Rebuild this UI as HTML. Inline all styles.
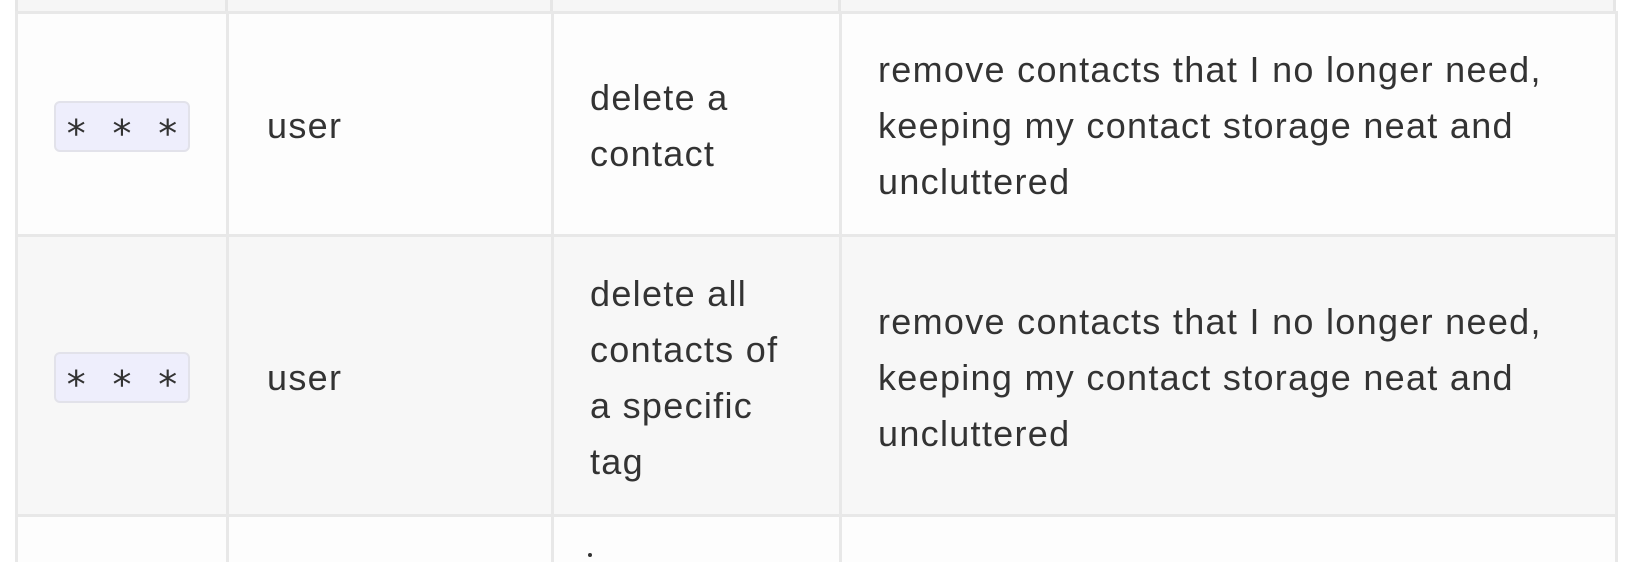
<!DOCTYPE html>
<html><head><style>
html,body{margin:0;padding:0;background:#fff;width:1633px;height:562px;overflow:hidden}
body{position:relative;font-family:"Liberation Sans",sans-serif;color:#333}
.top{position:absolute;left:15px;top:0;width:1601px;height:12px;background:#f6f6f6;border-left:3px solid #e6e6e6;border-right:3px solid #e6e6e6;box-sizing:border-box}
.tl{position:absolute;top:0;height:12px;width:3px;background:#e6e6e6}
table{position:absolute;left:15px;top:11px;border-collapse:collapse;table-layout:fixed;width:1603px}
td{border:3px solid #e8e8e8;font-size:36px;letter-spacing:1.3px;line-height:56px;padding:4px 36px 0;vertical-align:middle;box-sizing:border-box;white-space:nowrap;overflow:hidden}
tr.a td{background:#fdfdfd}
tr.b td{background:#f7f7f7}
td.c1{padding:0 0 0 36px}
.badge{display:inline-block;width:136px;text-align:center;background:#eeeefc;border:2px solid #e2e2ea;border-radius:6px;font-family:"DejaVu Sans Mono",monospace;font-size:38px;letter-spacing:0;line-height:47px;height:51px;box-sizing:border-box;vertical-align:middle}
td.c2{padding-left:38px}
.dot{position:absolute;left:588px;top:553px;width:4px;height:4px;background:#333;border-radius:2px}
</style></head><body>
<div class="top"></div>
<div class="tl" style="left:225px"></div><div class="tl" style="left:550px"></div><div class="tl" style="left:838px"></div>
<table>
<colgroup><col style="width:211px"><col style="width:325px"><col style="width:288px"><col></colgroup>
<tr class="a" style="height:223px"><td class="c1"><span class="badge">∗ ∗ ∗</span></td><td class="c2">user</td><td>delete a<br>contact</td><td>remove contacts that I no longer need,<br>keeping my contact storage neat and<br>uncluttered</td></tr>
<tr class="b" style="height:280px"><td class="c1"><span class="badge">∗ ∗ ∗</span></td><td class="c2">user</td><td>delete all<br>contacts of<br>a specific<br>tag</td><td>remove contacts that I no longer need,<br>keeping my contact storage neat and<br>uncluttered</td></tr>
<tr class="a" style="height:200px"><td class="c1"></td><td class="c2"></td><td></td><td></td></tr>
</table>
<div class="dot"></div>
</body></html>
